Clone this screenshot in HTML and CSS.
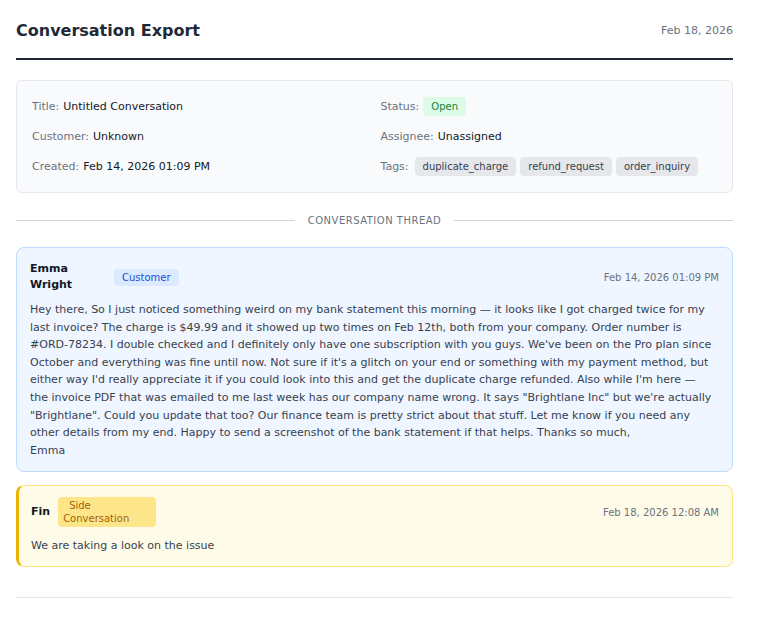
FILE: index.html
```html
<!DOCTYPE html>
<html>
<head>
  <title>Conversation Export</title>
  <link rel="stylesheet" href="styles.css">
</head>
<body>
  <div class="export-page">
    <div class="export-header">
      <h1 class="export-title">Conversation Export</h1>
      <span class="export-date">Feb 18, 2026</span>
    </div>

    <div class="meta-card">
      <div class="meta-item"><span class="meta-label">Title:</span> Untitled Conversation</div>
      <div class="meta-item"><span class="meta-label">Status:</span> <span class="status-badge">Open</span></div>
      <div class="meta-item"><span class="meta-label">Customer:</span> Unknown</div>
      <div class="meta-item"><span class="meta-label">Assignee:</span> Unassigned</div>
      <div class="meta-item"><span class="meta-label">Created:</span> Feb 14, 2026 01:09 PM</div>
      <div class="meta-item">
        <span class="meta-label">Tags:</span>
        <span class="tag-list">
          <span class="tag">duplicate_charge</span>
          <span class="tag">refund_request</span>
          <span class="tag">order_inquiry</span>
        </span>
      </div>
    </div>

    <div class="thread-divider">
      <span class="thread-line"></span>
      <span class="thread-label">Conversation Thread</span>
      <span class="thread-line"></span>
    </div>

    <div class="message message-customer">
      <div class="message-head">
        <div class="message-author author-wide">Emma Wright</div>
        <span class="role-badge role-customer">Customer</span>
        <span class="message-time">Feb 14, 2026 01:09 PM</span>
      </div>
      <div class="message-body">Hey there, So I just noticed something weird on my bank statement this morning — it looks like I got charged twice for my last invoice? The charge is $49.99 and it showed up two times on Feb 12th, both from your company. Order number is #ORD-78234. I double checked and I definitely only have one subscription with you guys. We've been on the Pro plan since October and everything was fine until now. Not sure if it's a glitch on your end or something with my payment method, but either way I'd really appreciate it if you could look into this and get the duplicate charge refunded. Also while I'm here — the invoice PDF that was emailed to me last week has our company name wrong. It says "Brightlane Inc" but we're actually "Brightlane". Could you update that too? Our finance team is pretty strict about that stuff. Let me know if you need any other details from my end. Happy to send a screenshot of the bank statement if that helps. Thanks so much,<br>Emma</div>
    </div>

    <div class="message message-side">
      <div class="message-head">
        <div class="message-author">Fin</div>
        <span class="role-badge role-side">Side Conversation</span>
        <span class="message-time">Feb 18, 2026 12:08 AM</span>
      </div>
      <div class="message-body">We are taking a look on the issue</div>
    </div>

    <div class="export-footer"></div>
  </div>
</body>
</html>
```

FILE: styles.css
```css
body {
  margin: 0;
  font-family: "DejaVu Sans", Verdana, sans-serif;
  color: #111827;
  background: #ffffff;
}

.export-page {
  width: 717px;
  padding: 16px;
}

.export-header {
  display: flex;
  justify-content: space-between;
  align-items: center;
  padding-bottom: 13px;
  border-bottom: 2px solid #1f2937;
  margin-bottom: 20px;
}

.export-title {
  margin: 0;
  font-size: 16px;
  line-height: 29px;
  font-weight: bold;
  color: #1f2937;
}

.export-date {
  font-size: 11px;
  color: #6b7280;
}

.meta-card {
  display: grid;
  grid-template-columns: 1fr 1fr;
  column-gap: 12px;
  row-gap: 11px;
  padding: 16px 15px;
  background: #f9fafb;
  border: 1px solid #e5e7eb;
  border-radius: 6px;
}

.meta-item {
  display: flex;
  align-items: center;
  gap: 4px;
  height: 19px;
  font-size: 11px;
  color: #111827;
}

.meta-label {
  color: #6b7280;
}

.status-badge {
  display: inline-block;
  padding: 0 8px;
  line-height: 19px;
  font-size: 10px;
  color: #15803d;
  background: #dcfce7;
  border-radius: 4px;
}

.tag-list {
  display: flex;
  gap: 4px;
  margin-left: 2px;
}

.tag {
  padding: 0 8px;
  line-height: 19px;
  font-size: 10px;
  color: #374151;
  background: #e5e7eb;
  border-radius: 4px;
}

.thread-divider {
  display: flex;
  align-items: center;
  gap: 13px;
  margin: 22px 0 21px;
}

.thread-line {
  flex: 1;
  height: 1px;
  background: #d1d5db;
}

.thread-label {
  font-size: 10px;
  letter-spacing: 0.5px;
  text-transform: uppercase;
  color: #6b7280;
}

.message {
  border: 1px solid;
  border-radius: 8px;
  padding: 13px 13px 12px;
  margin-bottom: 13px;
}

.message-customer {
  background: #eff6ff;
  border-color: #bfdbfe;
}

.message-customer .message-body {
  padding-right: 4px;
}

.message-side {
  background: #fefce8;
  border-color: #fde68a;
  border-left: 3px solid #eab308;
  padding: 11px 13px 11px 12px;
}

.message-side .message-head {
  margin-bottom: 10px;
}

.message-head {
  display: flex;
  align-items: center;
  gap: 8px;
  margin-bottom: 8px;
}

.message-author {
  font-size: 11px;
  line-height: 16px;
  font-weight: bold;
  color: #111827;
}

.author-wide {
  width: 76px;
}

.role-badge {
  font-size: 10px;
  line-height: 13px;
  padding: 2px 8px;
  border-radius: 4px;
}

.role-customer {
  color: #1d4ed8;
  background: #dbeafe;
}

.role-side {
  box-sizing: border-box;
  width: 98px;
  padding: 2px 5px;
  text-indent: 6px;
  color: #a16207;
  background: #fde68a;
}

.message-time {
  margin-left: auto;
  font-size: 10px;
  color: #6b7280;
}

.message-body {
  font-size: 11px;
  line-height: 17.6px;
  color: #374151;
}

.export-footer {
  margin-top: 30px;
  border-top: 1px solid #e5e7eb;
  height: 30px;
}
```
